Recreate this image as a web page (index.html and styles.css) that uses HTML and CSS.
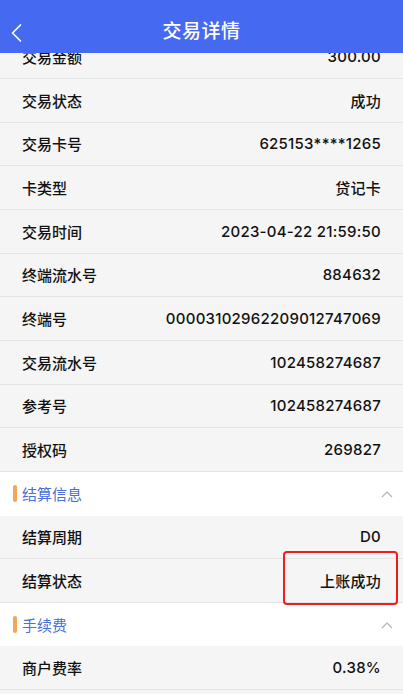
FILE: index.html
```html
<!DOCTYPE html>
<html lang="zh-CN">
<head>
    <meta charset="UTF-8">
    <meta name="viewport" content="width=device-width, initial-scale=1.0">
    <title>交易详情</title>
    <link rel="stylesheet" href="styles.css">
</head>
<body>
    <header class="nav">
        <svg class="nav-back" width="14" height="20" viewBox="0 0 14 20">
            <path d="M11.5 2 L3.5 10 L11.5 18" fill="none" stroke="#fff" stroke-width="1.7" stroke-linecap="round" stroke-linejoin="round"/>
        </svg>
        <h1 class="nav-title">交易详情</h1>
    </header>

    <main class="detail">
        <ul class="rows">
            <li class="row"><span>交易金额</span><span class="val">300.00</span></li>
            <li class="row"><span>交易状态</span><span class="val">成功</span></li>
            <li class="row"><span>交易卡号</span><span class="val">625153****1265</span></li>
            <li class="row"><span>卡类型</span><span class="val">贷记卡</span></li>
            <li class="row"><span>交易时间</span><span class="val">2023-04-22 21:59:50</span></li>
            <li class="row"><span>终端流水号</span><span class="val">884632</span></li>
            <li class="row"><span>终端号</span><span class="val">00003102962209012747069</span></li>
            <li class="row"><span>交易流水号</span><span class="val">102458274687</span></li>
            <li class="row"><span>参考号</span><span class="val">102458274687</span></li>
            <li class="row"><span>授权码</span><span class="val">269827</span></li>
        </ul>

        <div class="group">
            <span class="group-title">结算信息</span>
            <svg class="group-arrow" width="12" height="8" viewBox="0 0 12 8">
                <path d="M1 7 L6 2 L11 7" fill="none" stroke="#b4b4b4" stroke-width="1.2"/>
            </svg>
        </div>
        <ul class="rows">
            <li class="row"><span>结算周期</span><span class="val">D0</span></li>
            <li class="row marked"><span>结算状态</span><span class="val">上账成功</span><i class="mark"></i></li>
        </ul>

        <div class="group">
            <span class="group-title">手续费</span>
            <svg class="group-arrow" width="12" height="8" viewBox="0 0 12 8">
                <path d="M1 7 L6 2 L11 7" fill="none" stroke="#b4b4b4" stroke-width="1.2"/>
            </svg>
        </div>
        <ul class="rows">
            <li class="row"><span>商户费率</span><span class="val">0.38%</span></li>
        </ul>
    </main>
</body>
</html>
```

FILE: styles.css
```css
:root {
    --nav-color: #4669f2;
    --row-bg: #f5f5f5;
    --line: #e4e4e4;
    --text: #111;
}

* {
    box-sizing: border-box;
}

body {
    margin: 0;
    background-color: var(--row-bg);
    font-family: Inter, "Noto Sans CJK SC", sans-serif;
    color: var(--text);
}

.nav {
    position: fixed;
    top: 0;
    left: 0;
    right: 0;
    height: 53px;
    background-color: var(--nav-color);
    display: flex;
    align-items: center;
    justify-content: center;
    z-index: 2;
}

.nav-back {
    position: absolute;
    left: 9px;
    top: 23px;
}

.nav-title {
    margin: 0;
    padding-top: 6px;
    color: #fff;
    font-size: 19px;
    font-weight: 500;
    letter-spacing: 0.5px;
}

.detail {
    padding-top: 35.3px;
}

.rows {
    list-style: none;
    margin: 0;
    padding: 0;
}

.row {
    height: 43.67px;
    display: flex;
    align-items: center;
    justify-content: space-between;
    padding: 0 22px;
    border-bottom: 1px solid var(--line);
    font-size: 15px;
    font-weight: 500;
}

.row .val {
    letter-spacing: 0.25px;
}

.marked {
    position: relative;
}

.mark {
    position: absolute;
    left: 283px;
    top: -8px;
    width: 115px;
    height: 54px;
    border: 2px solid #f21c1c;
    border-radius: 4px;
}

.group {
    height: 43.67px;
    background-color: #fff;
    display: flex;
    align-items: center;
    justify-content: space-between;
    padding: 0 10px 0 13px;
}

.group-title {
    display: flex;
    align-items: center;
    gap: 5px;
    font-size: 15px;
    color: #4a6fd8;
}

.group-title::before {
    content: "";
    width: 4px;
    height: 17px;
    border-radius: 2px;
    background-color: #f2a65a;
}
```
